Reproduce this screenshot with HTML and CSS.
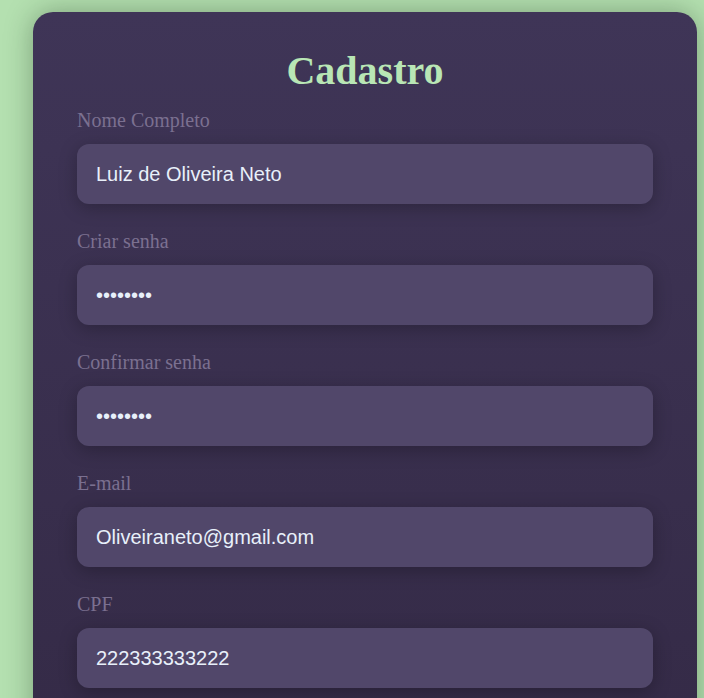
FILE: index.html
```html
<!DOCTYPE html>
<html lang="pt-BR">
<head>
<meta charset="utf-8">
<title>Cadastro</title>
<link rel="stylesheet" href="styles.css">
</head>
<body>
<main class="page">
  <form class="card">
    <h1 class="title">Cadastro</h1>
    <div class="field">
      <label class="label" for="nome">Nome Completo</label>
      <input class="input" id="nome" type="text" value="Luiz de Oliveira Neto">
    </div>
    <div class="field">
      <label class="label" for="senha">Criar senha</label>
      <input class="input" id="senha" type="password" value="12345678">
    </div>
    <div class="field">
      <label class="label" for="confirmar">Confirmar senha</label>
      <input class="input" id="confirmar" type="password" value="12345678">
    </div>
    <div class="field">
      <label class="label" for="email">E-mail</label>
      <input class="input" id="email" type="text" value="Oliveiraneto@gmail.com">
    </div>
    <div class="field">
      <label class="label" for="cpf">CPF</label>
      <input class="input" id="cpf" type="text" value="222333333222">
    </div>
  </form>
</main>
</body>
</html>
```
FILE: styles.css
```css
html, body {
  margin: 0;
  padding: 0;
}
body {
  background: #b4e0b0;
  overflow: hidden;
  height: 698px;
}
.page {
  padding: 12px 7px 0 33px;
}
.card {
  display: flex;
  flex-direction: column;
  background: linear-gradient(180deg, #3f3557 0%, #342a46 100%);
  border-radius: 20px;
  padding: 36px 44px 60px;
  box-shadow: 0 0 28px rgba(20, 40, 20, 0.35);
}
.title {
  margin: 0 0 15px;
  font-family: "Liberation Serif", "Times New Roman", serif;
  font-weight: bold;
  font-size: 40px;
  line-height: 46px;
  text-align: center;
  color: #b9e6b5;
}
.field {
  display: flex;
  flex-direction: column;
  gap: 12px;
  margin-bottom: 26px;
}
.label {
  font-family: "Liberation Serif", "Times New Roman", serif;
  font-size: 20px;
  line-height: 23px;
  color: #7b7090;
}
.input {
  box-sizing: border-box;
  height: 60px;
  width: 100%;
  border: none;
  outline: none;
  border-radius: 12px;
  padding: 0 19px;
  background: #51476a;
  color: #e8f0fa;
  font-family: "Liberation Sans", Arial, sans-serif;
  font-size: 20px;
  box-shadow: 0 4px 18px rgba(0, 0, 0, 0.25);
}
```
